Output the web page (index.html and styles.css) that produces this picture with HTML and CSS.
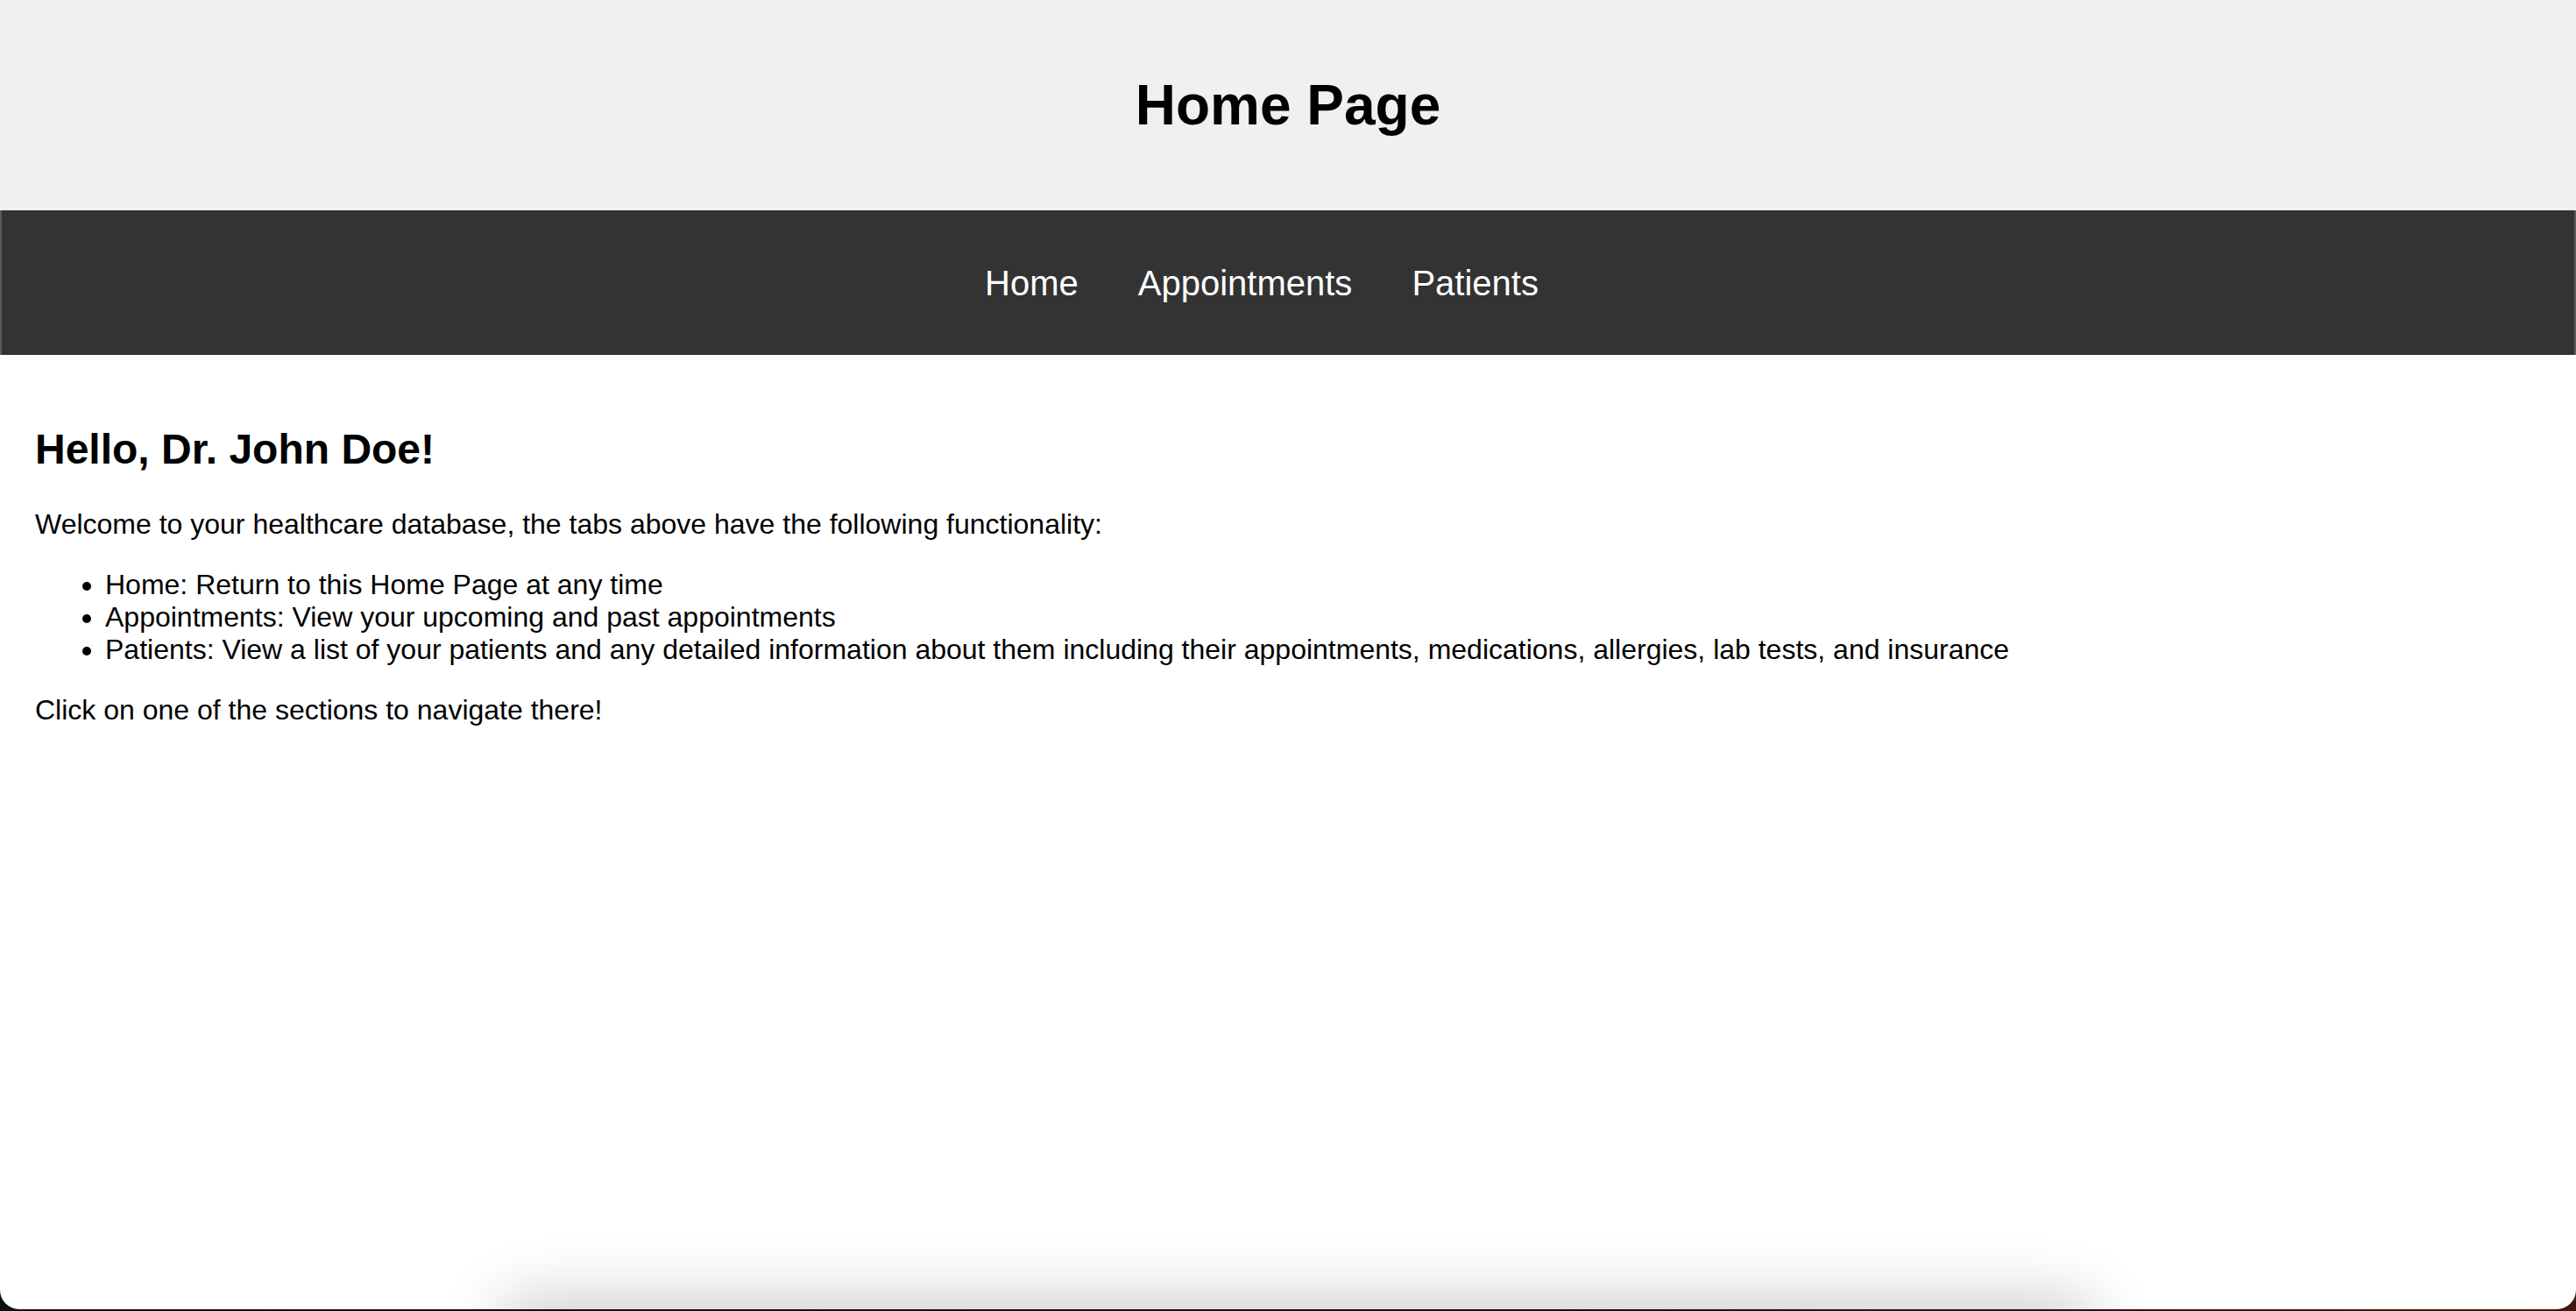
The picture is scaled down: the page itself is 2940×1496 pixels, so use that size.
FILE: index.html
```html
<!DOCTYPE html>
<html lang="en">
<head>
<meta charset="utf-8">
<title>Home Page</title>
<link rel="stylesheet" href="styles.css">
</head>
<body>
<div class="window">
  <header class="site-header">
    <h1 class="site-title">Home Page</h1>
  </header>
  <nav class="site-nav">
    <a class="nav-link" href="#">Home</a>
    <a class="nav-link" href="#">Appointments</a>
    <a class="nav-link" href="#">Patients</a>
  </nav>
  <main class="content">
    <h2 class="greeting">Hello, Dr. John Doe!</h2>
    <p class="text">Welcome to your healthcare database, the tabs above have the following functionality:</p>
    <ul class="features">
      <li>Home: Return to this Home Page at any time</li>
      <li>Appointments: View your upcoming and past appointments</li>
      <li>Patients: View a list of your patients and any detailed information about them including their appointments, medications, allergies, lab tests, and insurance</li>
    </ul>
    <p class="text">Click on one of the sections to navigate there!</p>
  </main>
  <div class="dock-shadow"></div>
</div>
</body>
</html>
```

FILE: styles.css
```css
html, body {
  margin: 0;
  padding: 0;
}

body {
  width: 2940px;
  height: 1496px;
  overflow: hidden;
  background: linear-gradient(90deg, #0a1014 0%, #141414 60%, #3a1a10 100%);
  font-family: "Liberation Sans", Arial, Helvetica, sans-serif;
  color: #000;
}

.window {
  position: relative;
  height: 1494px;
  background: #fff;
  border-bottom-left-radius: 22px;
  border-bottom-right-radius: 22px;
  overflow: hidden;
}

.site-header {
  background: #f0f0f0;
  padding: 40px;
  text-align: center;
}

.site-title {
  margin: 0;
  font-size: 64px;
  line-height: 160px;
  font-weight: bold;
}

.site-nav {
  background: #333;
  border-left: 2px solid #5a5a5a;
  border-right: 2px solid #5a5a5a;
  height: 165px;
  display: flex;
  align-items: center;
  justify-content: center;
  gap: 68px;
  padding-right: 60px;
}

.nav-link {
  color: #fff;
  text-decoration: none;
  font-size: 40px;
  line-height: 46px;
}

.content {
  padding: 40px;
}

.greeting {
  margin: 40px 0;
  font-size: 48px;
  line-height: 55px;
  font-weight: bold;
}

.text {
  margin: 32px 0;
  font-size: 32px;
  line-height: 37px;
}

.features {
  margin: 32px 0;
  padding-left: 80px;
  font-size: 32px;
  line-height: 37px;
}

.dock-shadow {
  position: absolute;
  left: 580px;
  width: 1800px;
  bottom: -50px;
  height: 50px;
  border-radius: 40px;
  box-shadow: 0 0 70px 14px rgba(0, 0, 0, 0.2);
}
```
